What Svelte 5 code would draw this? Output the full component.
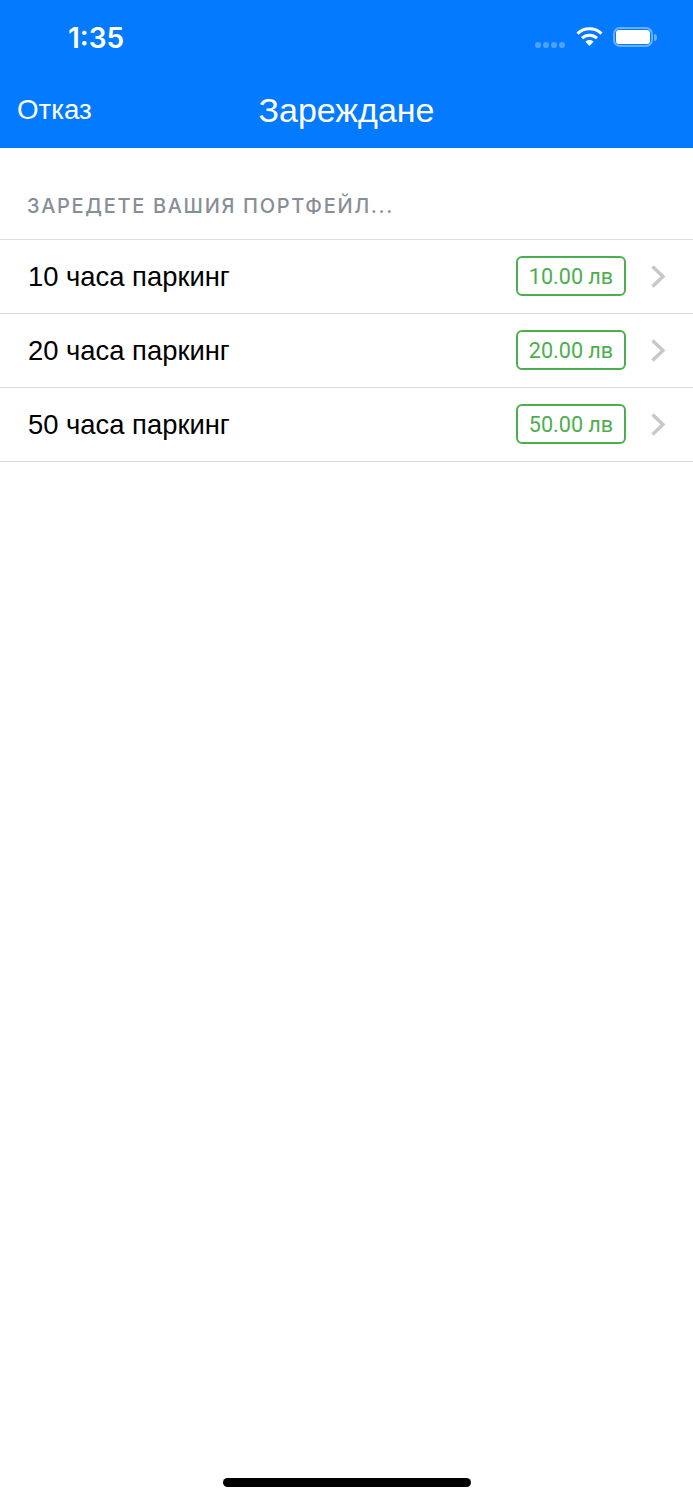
<script>
  const packages = [
    { name: '10 часа паркинг', price: '10.00 лв' },
    { name: '20 часа паркинг', price: '20.00 лв' },
    { name: '50 часа паркинг', price: '50.00 лв' }
  ];
</script>

<div class="page">
  <header class="top">
    <div class="status">
      <span class="time">1:35</span>
      <div class="status__icons">
        <div class="signal">
          <i></i><i></i><i></i><i></i>
        </div>
        <svg class="wifi" width="27" height="20" viewBox="0 0 27 20">
          <path d="M1.500 6.600C4.600 3.600 8.800 1.800 13.500 1.800s8.900 1.800 12 4.800" fill="none" stroke="#fff" stroke-width="3"/>
          <path d="M6 11.200c2-1.900 4.600-3 7.500-3s5.500 1.100 7.500 3" fill="none" stroke="#fff" stroke-width="3"/>
          <path d="M9.300 14.600c1.100-1 2.600-1.600 4.200-1.600s3.100.6 4.200 1.600L13.500 19z" fill="#fff"/>
        </svg>
        <div class="battery">
          <div class="battery__body"><div class="battery__fill"></div></div>
          <div class="battery__cap"></div>
        </div>
      </div>
    </div>
    <nav class="nav">
      <span class="nav__cancel">Отказ</span>
      <span class="nav__title">Зареждане</span>
    </nav>
  </header>

  <div class="section">ЗАРЕДЕТЕ ВАШИЯ ПОРТФЕЙЛ...</div>

  <ul class="list">
    {#each packages as item}
      <li class="row">
        <span class="row__name">{item.name}</span>
        <span class="badge">{item.price}</span>
        <svg class="chevron" width="16" height="24" viewBox="0 0 16 24">
          <path d="M2.500 2.500L13 12.500 2.500 22.500" fill="none" stroke="#c7c7cc" stroke-width="3.400"/>
        </svg>
      </li>
    {/each}
  </ul>

  <div class="spacer"></div>
  <div class="home"></div>
</div>

<style>
  :global(body) {
    margin: 0;
    background: #fff;
  }

  .page {
    display: flex;
    flex-direction: column;
    height: 1500px;
    font-family: "Liberation Sans", Arial, sans-serif;
  }

  .top {
    background: #037aff;
    color: #fff;
    height: 148px;
  }

  .status {
    display: flex;
    justify-content: space-between;
    height: 74px;
    padding: 0 36px 0 68px;
  }

  .time {
    font-family: Inter, sans-serif;
    font-size: 28px;
    font-weight: 600;
    line-height: 28px;
    margin-top: 24px;
  }

  .status__icons {
    display: flex;
    align-items: flex-start;
    padding-top: 27px;
  }

  .signal {
    display: flex;
    gap: 2px;
    margin-top: 15px;
    margin-right: 11px;
  }

  .signal i {
    width: 6px;
    height: 6px;
    border-radius: 50%;
    background: rgba(255, 255, 255, 0.3);
  }

  .wifi {
    margin-right: 10px;
  }

  .battery {
    display: flex;
    align-items: center;
    height: 20px;
  }

  .battery__body {
    box-sizing: border-box;
    width: 40px;
    height: 20px;
    padding: 1px;
    border: 2px solid rgba(255, 255, 255, 0.4);
    border-radius: 7px;
  }

  .battery__fill {
    height: 100%;
    background: #fff;
    border-radius: 3px;
  }

  .battery__cap {
    width: 3px;
    height: 7px;
    margin-left: 1px;
    background: rgba(255, 255, 255, 0.4);
    border-radius: 0 3px 3px 0;
  }

  .nav {
    display: flex;
    align-items: center;
    justify-content: center;
    position: relative;
    height: 72px;
  }

  .nav__cancel {
    position: absolute;
    left: 17px;
    top: 19px;
    font-size: 27.7px;
    line-height: 34px;
  }

  .nav__title {
    font-size: 34px;
    line-height: 38px;
  }

  .section {
    box-sizing: border-box;
    height: 92px;
    padding: 45px 27px 0;
    color: #878e96;
    font-family: Inter, sans-serif;
    font-size: 20px;
    font-weight: 500;
    line-height: 26px;
    letter-spacing: 1.68px;
    border-bottom: 1px solid #dcdcdc;
  }

  .list {
    list-style: none;
    margin: 0;
    padding: 0;
  }

  .row {
    box-sizing: border-box;
    display: flex;
    align-items: center;
    height: 74px;
    padding: 0 29px 1px 27px;
    border-bottom: 1px solid #dcdcdc;
  }

  .row__name {
    flex: 1;
    padding-top: 1px;
    padding-left: 1px;
    font-size: 27.4px;
    color: #000;
  }

  .badge {
    box-sizing: border-box;
    width: 110px;
    height: 40px;
    border: 2px solid #4cae4f;
    border-radius: 6px;
    color: #4cae4f;
    font-family: Roboto, sans-serif;
    font-size: 21.6px;
    line-height: 37px;
    text-align: center;
  }

  .chevron {
    margin-left: 24px;
    margin-right: -2px;
  }

  .spacer {
    flex: 1;
  }

  .home {
    align-self: center;
    width: 248px;
    height: 9px;
    margin-bottom: 13px;
    background: #000;
    border-radius: 5px;
  }
</style>
